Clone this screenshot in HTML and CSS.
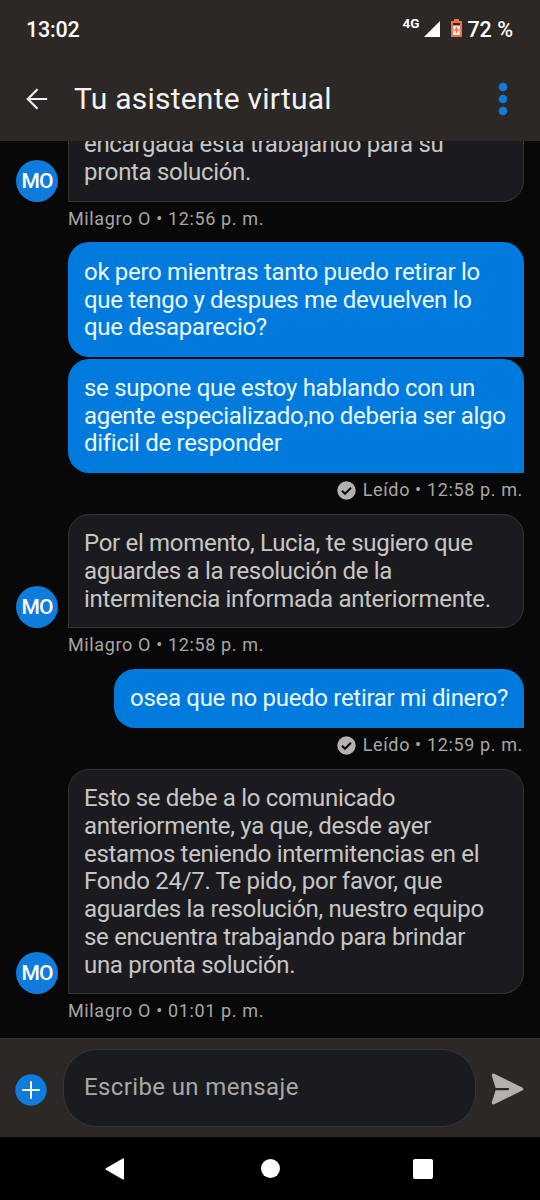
FILE: index.html
```html
<!DOCTYPE html>
<html lang="es">
<head>
<meta charset="utf-8">
<title>Tu asistente virtual</title>
<link rel="stylesheet" href="styles.css">
</head>
<body>
<div class="screen">
  <div class="statusbar">
    <span class="clock">13:02</span>
    <span class="network">4G</span>
    <svg class="signal" width="16" height="16" viewBox="0 0 16 16"><path d="M16 0V16H0Z" fill="#fff"/></svg>
    <svg class="battery" width="11" height="18" viewBox="0 0 11 18"><path d="M3 0h5v2h3v16H0V2h3z" fill="#ee704d"/><path d="M2 4h7v12H2z" fill="#fff0e8"/><path d="M2 4h7v2.500H2z" fill="#38231f"/><path d="M4.700 8h1.600v2.200H8.500v1.600H6.300V14H4.700v-2.200H2.500v-1.600h2.200z" fill="#ee704d"/></svg>
    <span class="percent">72 %</span>
  </div>
  <header class="appbar">
    <svg class="back" width="22" height="22" viewBox="0 0 22 22" fill="none" stroke="#f3f2f1" stroke-width="2.200"><path d="M21.200 11H2M11.500 1.300L1.800 11l9.700 9.700"/></svg>
    <h1 class="title">Tu asistente virtual</h1>
    <svg class="more" width="10" height="34" viewBox="0 0 10 34" fill="#0f7bdc"><circle cx="5" cy="5" r="4.300"/><circle cx="5" cy="17" r="4.300"/><circle cx="5" cy="29" r="4.300"/></svg>
  </header>
  <main class="chat">
    <div class="row">
      <div class="avatar">MO</div>
      <div class="bubble received">encargada está trabajando para su<br>pronta solución.</div>
    </div>
    <div class="meta">Milagro O • 12:56 p. m.</div>
    <div class="bubble sent stacked">ok pero mientras tanto puedo retirar lo<br>que tengo y despues me devuelven lo<br>que desaparecio?</div>
    <div class="bubble sent">se supone que estoy hablando con un<br>agente especializado,no deberia ser algo<br>dificil de responder</div>
    <div class="meta read"><svg class="check" width="19" height="19" viewBox="0 0 19 19"><circle cx="9.500" cy="9.500" r="9.200" fill="#b3b0ad"/><path d="M5 9.800l3 3 6-6" fill="none" stroke="#080808" stroke-width="2"/></svg><span>Leído • 12:58 p. m.</span></div>
    <div class="row">
      <div class="avatar">MO</div>
      <div class="bubble received">Por el momento, Lucia, te sugiero que<br>aguardes a la resolución de la<br>intermitencia informada anteriormente.</div>
    </div>
    <div class="meta">Milagro O • 12:58 p. m.</div>
    <div class="bubble sent short">osea que no puedo retirar mi dinero?</div>
    <div class="meta read"><svg class="check" width="19" height="19" viewBox="0 0 19 19"><circle cx="9.500" cy="9.500" r="9.200" fill="#b3b0ad"/><path d="M5 9.800l3 3 6-6" fill="none" stroke="#080808" stroke-width="2"/></svg><span>Leído • 12:59 p. m.</span></div>
    <div class="row">
      <div class="avatar">MO</div>
      <div class="bubble received">Esto se debe a lo comunicado<br>anteriormente, ya que, desde ayer<br>estamos teniendo intermitencias en el<br>Fondo 24/7. Te pido, por favor, que<br>aguardes la resolución, nuestro equipo<br>se encuentra trabajando para brindar<br>una pronta solución.</div>
    </div>
    <div class="meta last">Milagro O • 01:01 p. m.</div>
  </main>
  <footer class="composer">
    <svg class="add" width="32" height="32" viewBox="0 0 32 32"><circle cx="16" cy="16" r="15.700" fill="#0f7bdc"/><path d="M16 7.300v17.400M7.300 16h17.400" stroke="#fff" stroke-width="2"/></svg>
    <div class="field">Escribe un mensaje</div>
    <svg class="send" width="33" height="32" viewBox="0 0 33 32"><path d="M3.300.7L31.300 14.500q2.300 1.500 0 3L3.300 31.300Q.6 32.200.8 29.200L4.600 17.300H17q1.200-.1 1.200-1.200T17 14.900H4.600L.8 2.800Q.6-.3 3.300.7z" fill="#b3b0ad"/></svg>
  </footer>
  <nav class="navbar">
    <svg width="20" height="22" viewBox="0 0 20 22"><path d="M18.200 1.200v19.600L1.300 11z" fill="#fff" stroke="#fff" stroke-width="1.600" stroke-linejoin="round"/></svg>
    <span class="home"></span>
    <span class="recents"></span>
  </nav>
</div>
</body>
</html>
```
FILE: styles.css
```css
* { box-sizing: border-box; }
body { margin: 0; background: #000; font-family: Roboto, sans-serif; }
.screen { width: 540px; height: 1200px; display: flex; flex-direction: column; overflow: hidden; white-space: nowrap; }
svg { display: block; flex: none; }

.statusbar { height: 58px; flex: none; background: #2c2826; color: #fff; display: flex; align-items: center; padding: 0 27px 0 26px; font-size: 21.500px; font-weight: 500; }
.clock { margin-right: auto; letter-spacing: -.2px; }
.network { font-size: 13.500px; font-weight: 700; margin: -12px 5px 0 0; }
.signal { margin-right: 11px; }
.battery { margin-right: 5px; margin-top: -2px; }

.appbar { height: 83px; flex: none; background: #2c2826; display: flex; align-items: center; padding: 0 32px 2px 26px; }
.title { margin: 0 auto 0 26px; color: #f3f2f1; font-size: 30px; font-weight: 400; line-height: 36px; letter-spacing: .23px; }

.chat { height: 897px; flex: none; background: #080808; padding: 0 16px; display: flex; flex-direction: column; justify-content: flex-end; overflow: hidden; }
.row { display: flex; align-items: flex-end; gap: 10px; flex: none; }
.avatar { width: 42px; height: 42px; flex: none; border-radius: 50%; background: #0f7bdc; color: #fff; font-size: 21px; font-weight: 500; line-height: 43px; text-align: center; letter-spacing: -.8px; }
.bubble { flex: none; padding: 16.500px 16px 15px; font-size: 24px; line-height: 27.700px; letter-spacing: -.31px; border-radius: 21px; }
.received { flex: 1; padding: 15.500px 15px 14px; background: #1b1b1f; color: #c8c6c4; border: 1px solid #343437; border-bottom-left-radius: 0; }
.sent { margin-left: 52px; background: #007add; color: #eafaff; border-bottom-right-radius: 0; }
.short { align-self: flex-end; margin-left: 0; }
.stacked { margin-bottom: 1.500px; }
.meta { height: 40.600px; flex: none; padding: 5px 0 0 52px; color: #a8a6a4; font-size: 18px; line-height: 24px; letter-spacing: .63px; }
.read { display: flex; justify-content: flex-end; gap: 7px; padding-right: 1px; }
.check { margin-top: 3px; }
.last { height: 43.800px; }

.composer { height: 99px; flex: none; background: #2c2826; border-top: 1px solid #323130; display: flex; align-items: center; padding: 0 15px; }
.field { width: 413px; height: 78px; margin: 0 15px 0 16px; border: 1px solid #343637; border-radius: 34px; background: #1a1b1e; color: #aaa8a6; padding-left: 20px; font-size: 24px; line-height: 74px; letter-spacing: .37px; }
.add { margin-top: 4px; }
.send { margin-top: 2px; }

.navbar { height: 63px; flex: none; background: #000; display: flex; align-items: center; padding: 0 107px 0 105px; justify-content: space-between; }
.home { width: 19px; height: 19px; margin-left: 2px; border-radius: 50%; background: #fff; }
.recents { width: 20px; height: 20px; border-radius: 2px; background: #fff; }
```
